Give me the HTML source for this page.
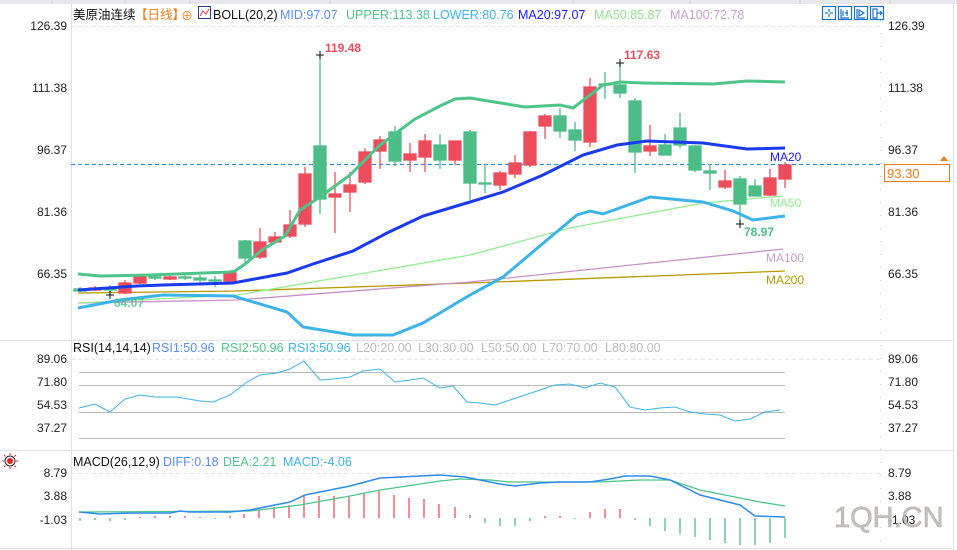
<!DOCTYPE html>
<html><head><meta charset="utf-8"><style>
html,body{margin:0;padding:0;background:#fff;width:957px;height:550px;overflow:hidden}
svg{display:block;font-family:"Liberation Sans","Noto Sans CJK SC",sans-serif}
</style></head><body>
<svg width="957" height="550" viewBox="0 0 957 550" xmlns="http://www.w3.org/2000/svg">
<!-- top strip -->
<rect x="0" y="0" width="957" height="4" fill="#e8e8ec"/>
<g stroke="#d0d0d8" stroke-width="1"><line x1="52" y1="0" x2="52" y2="4"/><line x1="125" y1="0" x2="125" y2="4"/><line x1="190" y1="0" x2="190" y2="4"/><line x1="330" y1="0" x2="330" y2="4"/><line x1="573" y1="0" x2="573" y2="4"/><line x1="690" y1="0" x2="690" y2="4"/><line x1="800" y1="0" x2="800" y2="4"/><line x1="890" y1="0" x2="890" y2="4"/></g>
<!-- frame lines -->
<g stroke="#e2e2e6" stroke-width="1">
<line x1="71.5" y1="4" x2="71.5" y2="550"/>
<line x1="953.5" y1="4" x2="953.5" y2="550"/>
<line x1="0" y1="340.5" x2="953" y2="340.5"/>
<line x1="0" y1="450.5" x2="953" y2="450.5"/>
<line x1="0" y1="548.5" x2="953" y2="548.5"/>
</g>
<line x1="880.5" y1="20" x2="880.5" y2="548" stroke="#c8c8c8" stroke-dasharray="1,12"/>
<line x1="71" y1="26.5" x2="880" y2="26.5" stroke="#e6e6e6" stroke-dasharray="4,3"/>
<line x1="71" y1="359.5" x2="880" y2="359.5" stroke="#e6e6e6" stroke-dasharray="4,3"/>
<line x1="71" y1="473.5" x2="880" y2="473.5" stroke="#e6e6e6" stroke-dasharray="4,3"/>

<!-- header -->
<g font-size="12.5">
<text x="73" y="19" fill="#111">美原油连续</text>
<text x="135" y="19" fill="#f07a18">【日线】</text>
<text x="181" y="20" fill="#f07a18" font-size="12">⊕</text>
<rect x="198.5" y="6.5" width="12" height="12" fill="#fff" stroke="#223a9a"/>
<polyline points="200,16 203,11 206,14 209,9" fill="none" stroke="#e33" stroke-width="1"/>
<text x="213" y="19" fill="#111">BOLL(20,2)</text>
<text x="280" y="19" fill="#5a8ef5">MID:97.07</text>
<text x="346" y="19" fill="#4ec48a">UPPER:113.38</text>
<text x="433" y="19" fill="#3db4e8">LOWER:80.76</text>
<text x="518" y="19" fill="#1a1aff">MA20:97.07</text>
<text x="594" y="19" fill="#8fe08f">MA50:85.87</text>
<text x="670" y="19" fill="#c8a0d0">MA100:72.78</text>
</g>
<!-- top-right icons -->
<g fill="none" stroke="#1a73c8" stroke-width="1.2">
<rect x="822.5" y="6.5" width="13" height="13"/><rect x="838.5" y="6.5" width="13" height="13"/><rect x="854.5" y="6.5" width="13" height="13"/><rect x="870.5" y="6.5" width="13" height="13"/>
<path d="M829 9v3M829 14v3M825 13h3M830 13h3"/>
<path d="M841 9v9h8M843 11v5M847 10v6M845 13h3"/>
<path d="M857 9v9h8M859 10l5 3-5 3z"/>
<path d="M873 9v9h4v-9zM877 13h5M880 11l2 2-2 2"/>
</g>

<!-- axis labels -->
<g font-size="12" fill="#222">
<g text-anchor="end">
<text x="67" y="30">126.39</text><text x="67" y="92">111.38</text><text x="67" y="154">96.37</text><text x="67" y="216">81.36</text><text x="67" y="278">66.35</text>
<text x="67" y="363">89.06</text><text x="67" y="386">71.80</text><text x="67" y="409">54.53</text><text x="67" y="432">37.27</text>
<text x="67" y="477">8.79</text><text x="67" y="500">3.88</text><text x="67" y="524">-1.03</text>
</g>
<text x="888" y="30">126.39</text><text x="888" y="92">111.38</text><text x="888" y="154">96.37</text><text x="888" y="216">81.36</text><text x="888" y="278">66.35</text>
<text x="888" y="363">89.06</text><text x="888" y="386">71.80</text><text x="888" y="409">54.53</text><text x="888" y="432">37.27</text>
<text x="888" y="477">8.79</text><text x="888" y="500">3.88</text><text x="888" y="524">-1.03</text>
</g>

<!-- current price line -->
<line x1="71" y1="164.5" x2="880" y2="164.5" stroke="#1e88ff" stroke-dasharray="4,3"/>
<rect x="884.5" y="164.5" width="65" height="17" fill="#fff" stroke="#f07a18"/>
<text x="887" y="178" font-size="13" fill="#f07a18">93.30</text>
<path d="M944 156l4 5h-8z" fill="#f07a18"/>

<!-- MAs thin -->
<polyline fill="none" stroke="#b89800" stroke-width="1.3" points="78,293 237,291 470,283 785,271"/>
<polyline fill="none" stroke="#c890c8" stroke-width="1.3" points="78,303 237,300 470,282 783,249"/>
<polyline fill="none" stroke="#90ee90" stroke-width="1.3" points="78,303 237,295 470,255 570,228 703,203 783,196"/>

<!-- candles -->
<g stroke-width="1.3">
<g fill="#4dbd87" stroke="#4dbd87">
<line x1="80" y1="287" x2="80" y2="292"/><rect x="74" y="289" width="12" height="2"/>
<line x1="110" y1="285" x2="110" y2="295"/><rect x="104" y="289" width="12" height="1"/>
<line x1="155" y1="274" x2="155" y2="280"/><rect x="149" y="277" width="12" height="1"/>
<line x1="185" y1="274" x2="185" y2="280"/><rect x="179" y="277" width="12" height="1"/>
<line x1="200" y1="275" x2="200" y2="282"/><rect x="194" y="278" width="12" height="2"/>
<line x1="215" y1="276" x2="215" y2="287"/><rect x="209" y="280" width="12" height="1"/>
<line x1="245" y1="240" x2="245" y2="263"/><rect x="239" y="241" width="12" height="17"/>
<line x1="320" y1="55" x2="320" y2="214"/><rect x="314" y="146" width="12" height="53"/>
<line x1="395" y1="126" x2="395" y2="166"/><rect x="389" y="132" width="12" height="29"/>
<line x1="440" y1="134" x2="440" y2="169"/><rect x="434" y="145" width="12" height="15"/>
<line x1="470" y1="130" x2="470" y2="200"/><rect x="464" y="132" width="12" height="51"/>
<line x1="485" y1="164" x2="485" y2="193"/><rect x="479" y="183" width="12" height="1"/>
<line x1="560" y1="108" x2="560" y2="138"/><rect x="554" y="116" width="12" height="15"/>
<line x1="575" y1="122" x2="575" y2="151"/><rect x="569" y="130" width="12" height="10"/>
<line x1="605" y1="72" x2="605" y2="99"/><rect x="599" y="84" width="12" height="1"/>
<line x1="620" y1="63" x2="620" y2="98"/><rect x="614" y="85" width="12" height="8"/>
<line x1="635" y1="98" x2="635" y2="173"/><rect x="629" y="101" width="12" height="51"/>
<line x1="665" y1="134" x2="665" y2="155"/><rect x="659" y="145" width="12" height="10"/>
<line x1="680" y1="113" x2="680" y2="148"/><rect x="674" y="128" width="12" height="17"/>
<line x1="695" y1="145" x2="695" y2="172"/><rect x="689" y="146" width="12" height="24"/>
<line x1="710" y1="164" x2="710" y2="190"/><rect x="704" y="171" width="12" height="2"/>
<line x1="740" y1="176" x2="740" y2="224"/><rect x="734" y="179" width="12" height="25"/>
<line x1="755" y1="179" x2="755" y2="196"/><rect x="749" y="186" width="12" height="10"/>
</g>
<g fill="#eb4d5c" stroke="#eb4d5c">
<line x1="95" y1="286" x2="95" y2="291"/><rect x="89" y="288" width="12" height="2"/>
<line x1="125" y1="280" x2="125" y2="294"/><rect x="119" y="283" width="12" height="10"/>
<line x1="140" y1="276" x2="140" y2="284"/><rect x="134" y="277" width="12" height="6"/>
<line x1="170" y1="273" x2="170" y2="280"/><rect x="164" y="277" width="12" height="2"/>
<line x1="230" y1="272" x2="230" y2="282"/><rect x="224" y="273" width="12" height="8"/>
<line x1="260" y1="228" x2="260" y2="259"/><rect x="254" y="242" width="12" height="15"/>
<line x1="275" y1="232" x2="275" y2="244"/><rect x="269" y="237" width="12" height="5"/>
<line x1="290" y1="210" x2="290" y2="238"/><rect x="284" y="225" width="12" height="11"/>
<line x1="305" y1="167" x2="305" y2="227"/><rect x="299" y="174" width="12" height="50"/>
<line x1="335" y1="172" x2="335" y2="233"/><rect x="329" y="194" width="12" height="3"/>
<line x1="350" y1="172" x2="350" y2="212"/><rect x="344" y="185" width="12" height="7"/>
<line x1="365" y1="148" x2="365" y2="184"/><rect x="359" y="152" width="12" height="30"/>
<line x1="380" y1="136" x2="380" y2="169"/><rect x="374" y="140" width="12" height="11"/>
<line x1="410" y1="143" x2="410" y2="172"/><rect x="404" y="154" width="12" height="6"/>
<line x1="425" y1="134" x2="425" y2="172"/><rect x="419" y="141" width="12" height="16"/>
<line x1="455" y1="141" x2="455" y2="165"/><rect x="449" y="141" width="12" height="19"/>
<line x1="500" y1="171" x2="500" y2="190"/><rect x="494" y="173" width="12" height="12"/>
<line x1="515" y1="155" x2="515" y2="178"/><rect x="509" y="163" width="12" height="11"/>
<line x1="530" y1="131" x2="530" y2="167"/><rect x="524" y="132" width="12" height="33"/>
<line x1="545" y1="114" x2="545" y2="139"/><rect x="539" y="116" width="12" height="10"/>
<line x1="590" y1="78" x2="590" y2="147"/><rect x="584" y="87" width="12" height="55"/>
<line x1="650" y1="125" x2="650" y2="156"/><rect x="644" y="146" width="12" height="5"/>
<line x1="725" y1="170" x2="725" y2="189"/><rect x="719" y="181" width="12" height="6"/>
<line x1="770" y1="169" x2="770" y2="196"/><rect x="764" y="178" width="12" height="17"/>
<line x1="785" y1="162" x2="785" y2="188"/><rect x="779" y="165" width="12" height="14"/>
</g>
</g>

<!-- BOLL -->
<polyline fill="none" stroke="#4ec48a" stroke-width="3" points="78,274 100,276 150,275 230,272 235,271 245,264 262,250 285,236 300,210 320,197 350,175 380,145 415,119 440,106 455,99 470,98 525,107 560,105 573,108 603,85 620,82 643,83 713,84 747,81 785,82"/>
<polyline fill="none" stroke="#1a3aef" stroke-width="3" points="78,290 137,286 163,285 233,283 287,273 313,264 353,251 387,233 423,216 470,202 503,192 543,175 583,155 617,145 647,141 703,143 747,149 785,148"/>
<polyline fill="none" stroke="#3db4e8" stroke-width="3" points="78,308 120,300 163,295 233,296 287,312 303,327 353,335 393,335 423,323 470,295 503,277 547,240 577,215 590,211 603,214 650,197 703,202 733,211 753,220 785,216"/>

<!-- extremes -->
<g stroke="#111" stroke-width="1"><path d="M316 55h8M320 51v8"/><path d="M616 63h8M620 59v8"/><path d="M736 224h8M740 220v8"/><path d="M106 295h8M110 291v8"/></g>
<g font-size="12" font-weight="bold">
<text x="325" y="52" fill="#eb4d5c">119.48</text>
<text x="624" y="59" fill="#eb4d5c">117.63</text>
<text x="744" y="236" fill="#4dbd87">78.97</text>
<text x="114" y="307" fill="#4dbd87" opacity="0.8">64.07</text>
</g>
<g font-size="12">
<text x="770" y="161" fill="#1a1aff">MA20</text>
<text x="770" y="207" fill="#90ee90">MA50</text>
<text x="766" y="262" fill="#c8a0d0">MA100</text>
<text x="766" y="284" fill="#b89800">MA200</text>
</g>

<!-- RSI -->
<g font-size="12.5">
<text x="73" y="352" fill="#111">RSI(14,14,14)</text>
<text x="152" y="352" fill="#5a8ef5">RSI1:50.96</text>
<text x="221" y="352" fill="#4ec48a">RSI2:50.96</text>
<text x="288" y="352" fill="#3db4e8">RSI3:50.96</text>
<text x="356" y="352" fill="#bbb">L20:20.00</text>
<text x="418" y="352" fill="#bbb">L30:30.00</text>
<text x="481" y="352" fill="#bbb">L50:50.00</text>
<text x="542" y="352" fill="#bbb">L70:70.00</text>
<text x="605" y="352" fill="#bbb">L80:80.00</text>
</g>
<g stroke="#bbb" stroke-width="1"><line x1="79" y1="372.5" x2="785" y2="372.5"/><line x1="79" y1="385.5" x2="785" y2="385.5"/><line x1="79" y1="412.5" x2="785" y2="412.5"/><line x1="79" y1="438.5" x2="785" y2="438.5"/></g>
<polyline fill="none" stroke="#3db4e8" stroke-width="1" points="79,408 95,404 110,412 125,399 140,395 155,397 177,397 200,401 213,402 230,395 247,382 260,375 277,373 290,369 304,361 320,380 333,379 350,377 363,371 380,369 395,382 410,380 423,378 440,388 453,386 467,402 480,403 495,405 510,400 525,395 540,390 555,385 570,384 585,388 600,383 615,387 630,407 645,410 660,408 675,407 690,412 705,414 720,415 735,421 750,419 765,412 780,410"/>

<!-- MACD -->
<g transform="translate(10,461)"><circle r="3" fill="#e22"/><circle r="5" fill="none" stroke="#222" stroke-width="1"/><path d="M-8 0h2M6 0h2M0 -8v2M0 6v2M-6 -6l1.5 1.5M6 6l-1.5-1.5M6 -6l-1.5 1.5M-6 6l1.5-1.5" stroke="#e22" stroke-width="1"/></g>
<g font-size="12.5">
<text x="73" y="466" fill="#111">MACD(26,12,9)</text>
<text x="163" y="466" fill="#5a8ef5">DIFF:0.18</text>
<text x="223" y="466" fill="#4ec48a">DEA:2.21</text>
<text x="283" y="466" fill="#3db4e8">MACD:-4.06</text>
</g>
<g stroke-width="1.3">
<g stroke="#4dbd87">
<line x1="80" y1="518" x2="80" y2="521"/><line x1="95" y1="518" x2="95" y2="520"/><line x1="110" y1="518" x2="110" y2="521"/><line x1="125" y1="518" x2="125" y2="520"/><line x1="215" y1="518" x2="215" y2="519"/>
<line x1="485" y1="518" x2="485" y2="523"/><line x1="500" y1="518" x2="500" y2="526"/><line x1="515" y1="518" x2="515" y2="526"/><line x1="530" y1="518" x2="530" y2="521"/><line x1="575" y1="518" x2="575" y2="519"/>
<line x1="635" y1="518" x2="635" y2="520"/><line x1="650" y1="518" x2="650" y2="526"/><line x1="665" y1="518" x2="665" y2="531"/><line x1="680" y1="518" x2="680" y2="534"/><line x1="695" y1="518" x2="695" y2="537"/><line x1="710" y1="518" x2="710" y2="540"/><line x1="725" y1="518" x2="725" y2="543"/><line x1="740" y1="518" x2="740" y2="545"/><line x1="755" y1="518" x2="755" y2="545"/><line x1="770" y1="518" x2="770" y2="543"/><line x1="785" y1="518" x2="785" y2="538"/>
</g>
<g stroke="#eb4d5c">
<line x1="140" y1="517" x2="140" y2="518"/><line x1="155" y1="516" x2="155" y2="518"/><line x1="170" y1="516" x2="170" y2="518"/><line x1="185" y1="516" x2="185" y2="518"/><line x1="200" y1="517" x2="200" y2="518"/><line x1="230" y1="516" x2="230" y2="518"/>
<line x1="244" y1="514" x2="244" y2="518"/><line x1="259" y1="510" x2="259" y2="518"/><line x1="274" y1="507" x2="274" y2="518"/><line x1="289" y1="505" x2="289" y2="518"/><line x1="304" y1="495" x2="304" y2="518"/><line x1="319" y1="496" x2="319" y2="518"/><line x1="334" y1="496" x2="334" y2="518"/><line x1="349" y1="496" x2="349" y2="518"/><line x1="364" y1="493" x2="364" y2="518"/><line x1="379" y1="491" x2="379" y2="518"/><line x1="394" y1="495" x2="394" y2="518"/><line x1="409" y1="498" x2="409" y2="518"/><line x1="424" y1="499" x2="424" y2="518"/><line x1="439" y1="504" x2="439" y2="518"/><line x1="455" y1="507" x2="455" y2="518"/><line x1="470" y1="515" x2="470" y2="518"/>
<line x1="545" y1="516" x2="545" y2="518"/><line x1="560" y1="516" x2="560" y2="518"/><line x1="590" y1="512" x2="590" y2="518"/><line x1="605" y1="509" x2="605" y2="518"/><line x1="620" y1="509" x2="620" y2="518"/>
</g>
</g>
<polyline fill="none" stroke="#4ec48a" stroke-width="1.3" points="79,512 250,511 300,505 350,496 380,490 420,484 440,481 460,479 490,480 510,482 560,482 600,482 640,480 670,480 700,490 760,502 785,506"/>
<polyline fill="none" stroke="#2d8cf0" stroke-width="1.5" points="79,512 100,514 130,513 170,513 180,511 190,512 230,512 250,510 290,502 305,495 350,486 380,478 420,476 440,475 465,477 480,480 500,484 515,486 540,483 560,482 590,482 610,479 625,476 650,476 670,480 700,495 740,505 755,516 785,517"/>

<!-- watermark -->
<text x="834" y="527" font-size="29" fill="#bdb6b2" stroke="#a9a4a0" stroke-width="0.6" opacity="0.85">1QH.CN</text>
</svg>
</body></html>
